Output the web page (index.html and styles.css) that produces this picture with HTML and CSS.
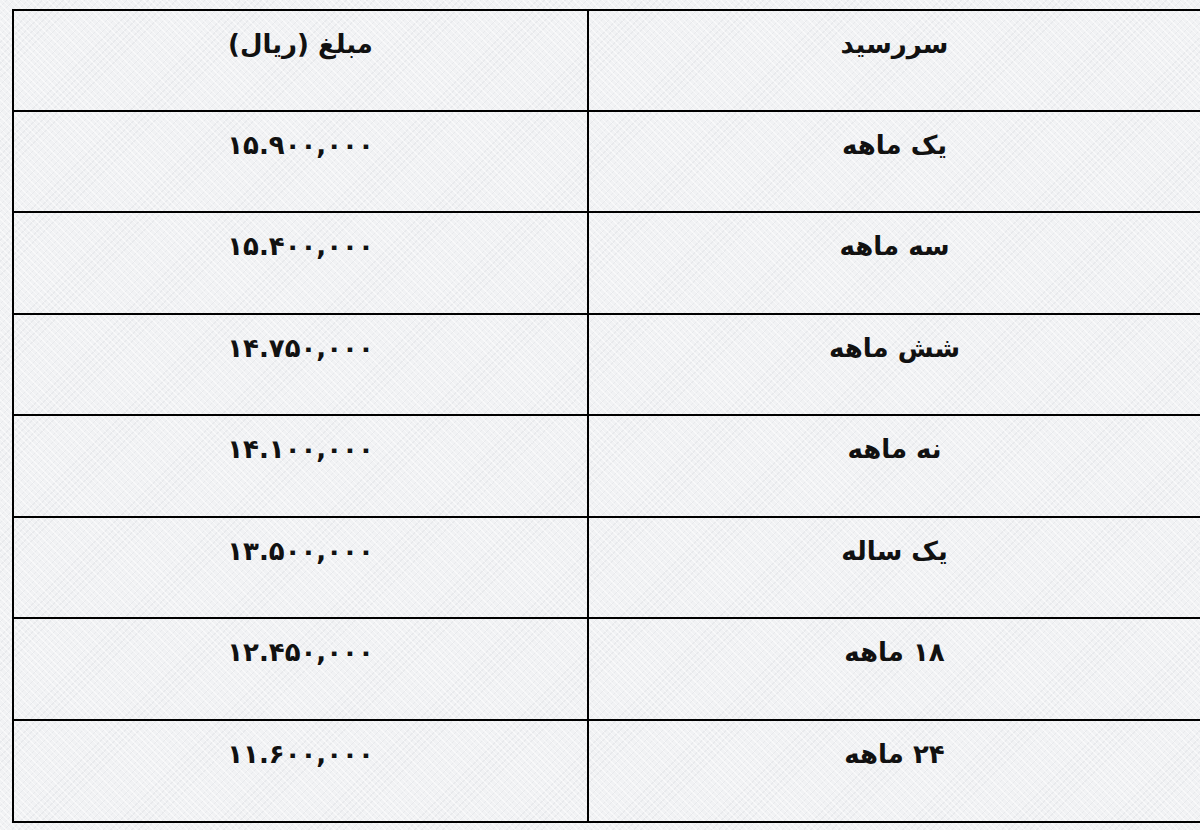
FILE: index.html
```html
<!DOCTYPE html>
<html lang="fa">
<head>
<meta charset="utf-8">
<link rel="stylesheet" href="styles.css">
</head>
<body>
<table class="rates" dir="rtl">
  <tr class="head"><td>سررسید</td><td>مبلغ (ریال)</td></tr>
  <tr><td>یک ماهه</td><td>۱۵.۹۰۰,۰۰۰</td></tr>
  <tr><td>سه ماهه</td><td>۱۵.۴۰۰,۰۰۰</td></tr>
  <tr><td>شش ماهه</td><td>۱۴.۷۵۰,۰۰۰</td></tr>
  <tr><td>نه ماهه</td><td>۱۴.۱۰۰,۰۰۰</td></tr>
  <tr><td>یک ساله</td><td>۱۳.۵۰۰,۰۰۰</td></tr>
  <tr><td>۱۸ ماهه</td><td>۱۲.۴۵۰,۰۰۰</td></tr>
  <tr><td>۲۴ ماهه</td><td>۱۱.۶۰۰,۰۰۰</td></tr>
</table>
</body>
</html>
```
FILE: styles.css
```css
html, body {
  margin: 0;
  padding: 0;
  overflow: hidden;
  background-color: #f1f2f4;
  background-image:
    repeating-linear-gradient(45deg, rgba(255,255,255,0.55) 0 1px, transparent 1px 4px),
    repeating-linear-gradient(-45deg, rgba(220,222,226,0.45) 0 1px, transparent 1px 5px);
}
body {
  width: 1200px;
  height: 830px;
  font-family: "DejaVu Sans", sans-serif;
}
.rates {
  border-collapse: collapse;
  margin: 9px 0 0 12px;
  width: 1190px;
  table-layout: fixed;
}
.rates td {
  border: 2px solid #000;
  height: 101.6px;
  padding: 16px 0 0 0;
  vertical-align: top;
  text-align: center;
  font-weight: bold;
  font-size: 26px;
  line-height: 34px;
  color: #111;
  box-sizing: border-box;
}
.rates .head td {
  height: 100.5px;
}
.rates td:first-child {
  width: 613px;
}
```
